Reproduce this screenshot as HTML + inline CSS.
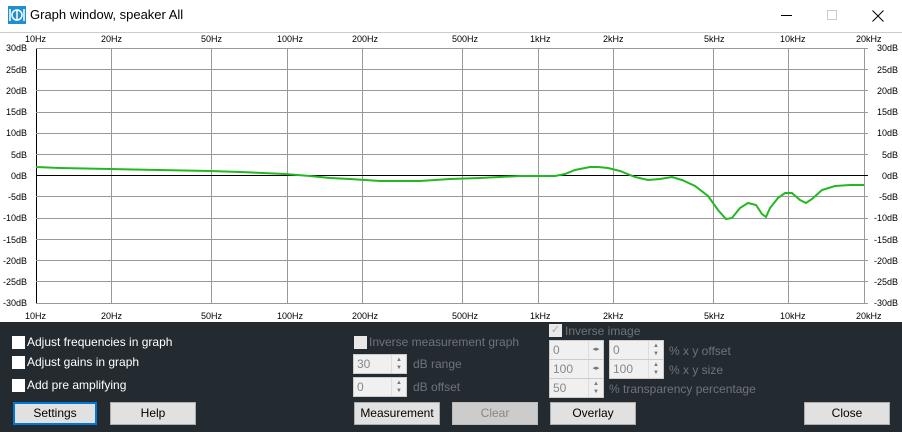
<!DOCTYPE html><html><head><style>
*{margin:0;padding:0;box-sizing:border-box}
body{width:902px;height:432px;overflow:hidden;background:#232b31;font-family:"Liberation Sans",sans-serif;position:relative}
.t{position:absolute;white-space:nowrap}
.cb{position:absolute;width:13px;height:13px;background:#fff}
.lab{position:absolute;color:#fff;font-size:12px;white-space:nowrap}
.dis{color:#6e7479}
.btn{position:absolute;height:23px;background:#e1e1e1;border:1px solid #adadad;font-size:12px;text-align:center;line-height:21px;color:#000}
.sp{position:absolute;height:20px;background:#f0f0f0;border:1px solid #ccc;font-size:12px;color:#888;line-height:18px;padding-left:3px}
.ar{position:absolute;right:0;top:0;width:15px;height:18px;border-left:1px solid #ddd;font-size:6px;color:#777;text-align:center;line-height:8px;padding-top:1px}
</style></head><body>
<div style="position:absolute;left:0;top:0;width:902px;height:32px;background:#fff"></div>
<svg style="position:absolute;left:8px;top:6px" width="18" height="18"><rect width="18" height="18" fill="#1e90d0"/><circle cx="9" cy="9" r="5" fill="none" stroke="#fff" stroke-width="1.5"/><path d="M2 3v12M16 3v12M9 4v10" stroke="#fff" stroke-width="1.5"/></svg>
<div class="t" style="left:30px;top:7px;font-size:13px;color:#000">Graph window, speaker All</div>
<div class="t" style="left:781px;top:15px;width:11px;height:1px;background:#000"></div>
<div class="t" style="left:827px;top:10px;width:10px;height:10px;border:1px solid #ccc"></div>
<svg style="position:absolute;left:872px;top:10px" width="12" height="12"><path d="M0.5 0.5L11.5 11.5M11.5 0.5L0.5 11.5" stroke="#000" stroke-width="1"/></svg>
<div style="position:absolute;left:0;top:32px;width:902px;height:290px;background:#fff;border-top:1px solid #ccc"></div>
<svg style="position:absolute;left:0;top:0" width="902" height="432" font-family="Liberation Sans" font-size="9" fill="#000">
<g stroke="#999" stroke-width="1">
<line x1="36.5" y1="48" x2="36.5" y2="303" stroke="#000"/>
<line x1="111.5" y1="48" x2="111.5" y2="303"/><line x1="211.5" y1="48" x2="211.5" y2="303"/><line x1="287.5" y1="48" x2="287.5" y2="303"/><line x1="362.5" y1="48" x2="362.5" y2="303"/><line x1="462.5" y1="48" x2="462.5" y2="303"/><line x1="538.5" y1="48" x2="538.5" y2="303"/><line x1="613.5" y1="48" x2="613.5" y2="303"/><line x1="713.5" y1="48" x2="713.5" y2="303"/><line x1="788.5" y1="48" x2="788.5" y2="303"/><line x1="864.5" y1="48" x2="864.5" y2="303"/>
<line x1="36" y1="48.5" x2="868" y2="48.5"/><line x1="36" y1="69.5" x2="868" y2="69.5"/><line x1="36" y1="90.5" x2="868" y2="90.5"/><line x1="36" y1="112.5" x2="868" y2="112.5"/><line x1="36" y1="133.5" x2="868" y2="133.5"/><line x1="36" y1="154.5" x2="868" y2="154.5"/>
<line x1="36" y1="196.5" x2="868" y2="196.5"/><line x1="36" y1="218.5" x2="868" y2="218.5"/><line x1="36" y1="239.5" x2="868" y2="239.5"/><line x1="36" y1="260.5" x2="868" y2="260.5"/><line x1="36" y1="281.5" x2="868" y2="281.5"/><line x1="36" y1="303.5" x2="868" y2="303.5"/>
<line x1="36" y1="175.5" x2="868" y2="175.5" stroke="#000"/>
</g>
<g>
<text x="25" y="42">10Hz</text><text x="101" y="42">20Hz</text><text x="201" y="42">50Hz</text><text x="277" y="42">100Hz</text><text x="352" y="42">200Hz</text><text x="452" y="42">500Hz</text><text x="530" y="42">1kHz</text><text x="603" y="42">2kHz</text><text x="704" y="42">5kHz</text><text x="780" y="42">10kHz</text><text x="856" y="42">20kHz</text>
<text x="25" y="319">10Hz</text><text x="101" y="319">20Hz</text><text x="201" y="319">50Hz</text><text x="277" y="319">100Hz</text><text x="352" y="319">200Hz</text><text x="452" y="319">500Hz</text><text x="530" y="319">1kHz</text><text x="603" y="319">2kHz</text><text x="704" y="319">5kHz</text><text x="780" y="319">10kHz</text><text x="856" y="319">20kHz</text>
</g>
<g text-anchor="end">
<text x="27" y="51">30dB</text><text x="27" y="73">25dB</text><text x="27" y="94">20dB</text><text x="27" y="115">15dB</text><text x="27" y="136">10dB</text><text x="27" y="158">5dB</text><text x="27" y="179">0dB</text><text x="27" y="200">-5dB</text><text x="27" y="221">-10dB</text><text x="27" y="243">-15dB</text><text x="27" y="264">-20dB</text><text x="27" y="285">-25dB</text><text x="27" y="306">-30dB</text>
</g>
<g text-anchor="end">
<text x="898" y="51">30dB</text><text x="898" y="73">25dB</text><text x="898" y="94">20dB</text><text x="898" y="115">15dB</text><text x="898" y="136">10dB</text><text x="898" y="158">5dB</text><text x="898" y="179">0dB</text><text x="898" y="200">-5dB</text><text x="898" y="221">-10dB</text><text x="898" y="243">-15dB</text><text x="898" y="264">-20dB</text><text x="898" y="285">-25dB</text><text x="898" y="306">-30dB</text>
</g>
<polyline fill="none" stroke="#22b822" stroke-width="2" points="36,167 60,168 110,169 210,171 240,172 285,174 310,176 330,178 350,179 380,181 420,181 450,179 480,178 520,176 555,176 565,174 575,170 590,167 598,167 608,168 620,171 635,177 648,180 660,179 672,177 682,180 695,186 708,196 718,210 726,219 732,218 740,208 748,203 756,205 762,214 766,217 770,208 778,198 785,193 792,193 800,200 806,203 812,199 822,190 835,186 850,185 864,185"/>
</svg>
<div class="cb" style="left:12px;top:336px"></div><div class="lab" style="left:27px;top:335px">Adjust frequencies in graph</div>
<div class="cb" style="left:12px;top:356px"></div><div class="lab" style="left:27px;top:355px">Adjust gains in graph</div>
<div class="cb" style="left:12px;top:379px"></div><div class="lab" style="left:27px;top:378px">Add pre amplifying</div>
<div class="btn" style="left:13px;top:402px;width:84px;border:2px solid #0078d7;line-height:19px">Settings</div>
<div class="btn" style="left:110px;top:402px;width:86px">Help</div>
<div class="cb" style="left:354px;top:336px;background:#e8e8e8"></div><div class="lab dis" style="left:369px;top:335px">Inverse measurement graph</div>
<div class="sp" style="left:353px;top:354px;width:54px">30<div class="ar">▲<br>▼</div></div><div class="lab dis" style="left:413px;top:357px">dB range</div>
<div class="sp" style="left:353px;top:377px;width:54px">0<div class="ar">▲<br>▼</div></div><div class="lab dis" style="left:413px;top:380px">dB offset</div>
<div class="btn" style="left:354px;top:402px;width:86px">Measurement</div>
<div class="btn" style="left:452px;top:402px;width:86px;background:#ccc;border-color:#bbb;color:#888">Clear</div>
<div class="cb" style="left:549px;top:324px;background:#e8e8e8;color:#aaa;font-size:11px;line-height:13px;text-align:center">✓</div><div class="lab dis" style="left:565px;top:324px">Inverse image</div>
<div class="sp" style="left:549px;top:340px;width:55px">0<div class="ar" style="font-size:7px;line-height:18px;padding:0">◂▸</div></div>
<div class="sp" style="left:609px;top:340px;width:55px">0<div class="ar">▲<br>▼</div></div><div class="lab dis" style="left:669px;top:344px">% x y offset</div>
<div class="sp" style="left:549px;top:359px;width:55px">100<div class="ar" style="font-size:7px;line-height:18px;padding:0">◂▸</div></div>
<div class="sp" style="left:609px;top:359px;width:55px">100<div class="ar">▲<br>▼</div></div><div class="lab dis" style="left:669px;top:363px">% x y size</div>
<div class="sp" style="left:549px;top:378px;width:55px">50<div class="ar">▲<br>▼</div></div><div class="lab dis" style="left:609px;top:382px">% transparency percentage</div>
<div class="btn" style="left:550px;top:402px;width:86px">Overlay</div>
<div class="btn" style="left:804px;top:402px;width:86px">Close</div>
</body></html>
